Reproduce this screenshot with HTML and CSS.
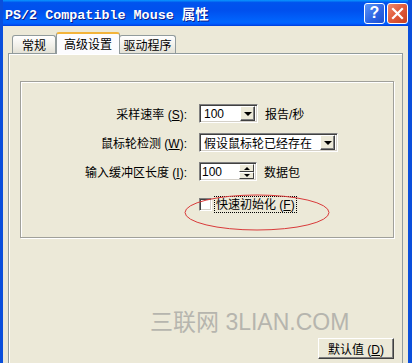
FILE: index.html
```html
<!DOCTYPE html>
<html lang="zh-CN">
<head>
    <meta charset="UTF-8">
    <meta name="viewport" content="width=device-width, initial-scale=1.0">
    <title>PS/2 Compatible Mouse 属性</title>
    <link rel="stylesheet" href="styles.css">
</head>
<body>
    <div class="window">
        <div class="titlebar">
            <span class="title">PS/2 Compatible Mouse 属性</span>
            <span class="tb-btn help">?</span>
            <span class="tb-btn close">
                <svg width="13" height="13" viewBox="0 0 13 13">
                    <path d="M2 2 L11 11 M11 2 L2 11" stroke="#fff" stroke-width="2.2" stroke-linecap="square"/>
                </svg>
            </span>
        </div>

        <div class="body">
            <div class="tabs">
                <div class="tab t1">常规</div>
                <div class="tab t2 active">高级设置</div>
                <div class="tab t3">驱动程序</div>
            </div>

            <div class="panel">
                <div class="group">
                    <div class="label">采样速率 (<u>S</u>):</div>
                    <div class="field">
                        <div class="combo rate"><span class="value">100</span><span class="drop"><i></i></span></div>
                        <span class="unit">报告/秒</span>
                    </div>

                    <div class="label">鼠标轮检测 (<u>W</u>):</div>
                    <div class="field">
                        <div class="combo wheel"><span class="value">假设鼠标轮已经存在</span><span class="drop"><i></i></span></div>
                    </div>

                    <div class="label">输入缓冲区长度 (<u>I</u>):</div>
                    <div class="field">
                        <div class="combo spin"><span class="value">100</span><span class="spinner"><span class="sb up"><i></i></span><span class="sb down"><i></i></span></span></div>
                        <span class="unit">数据包</span>
                    </div>

                    <div class="field check-row">
                        <span class="checkbox"></span>
                        <span class="check-text">快速初始化 (<u>F</u>)</span>
                    </div>

                    <svg class="mark" width="146" height="37" viewBox="0 0 146 37">
                        <ellipse cx="73" cy="18.5" rx="72" ry="17.5" fill="none" stroke="#d93a3a" stroke-width="1"/>
                    </svg>
                </div>

                <div class="watermark">三联网 3LIAN.COM</div>

                <div class="footer">
                    <button class="btn">默认值 (<u>D</u>)</button>
                </div>
            </div>
        </div>
    </div>
</body>
</html>
```

FILE: styles.css
```css
body {
    margin: 0;
    font-family: "Liberation Sans", "Noto Sans CJK SC", sans-serif;
    font-size: 12px;
    background: #ece9d8;
}
.window {
    width: 412px;
    height: 363px;
    box-sizing: border-box;
    overflow: hidden;
    position: relative;
    background: #ece9d8;
    border-left: 3px solid #0a4fdc;
    border-right: 4px solid #0a4fdc;
}
.titlebar {
    height: 26px;
    margin: 0 -4px 0 -3px;
    padding: 0 4px 0 5px;
    display: flex;
    align-items: center;
    background: linear-gradient(to bottom, #0997ff 0%, #0053ee 10%, #0050ee 40%, #0066ff 85%, #005bff 92%, #003dd7 100%);
}
.title {
    flex: 1;
    color: #fff;
    font-family: "Liberation Mono", "Noto Sans CJK SC", monospace;
    font-weight: bold;
    font-size: 13.4px;
    text-shadow: 1px 1px 0 #0a1a8a;
    white-space: nowrap;
}
.tb-btn {
    width: 19px;
    height: 19px;
    border: 1px solid #fff;
    border-radius: 3px;
    margin-left: 2px;
    display: flex;
    align-items: center;
    justify-content: center;
    color: #fff;
}
.help {
    background: linear-gradient(135deg, #5b95f8, #2a62e2 60%, #1d4fd0);
    font-family: "Liberation Sans", sans-serif;
    font-weight: bold;
    font-size: 16px;
}
.close {
    background: linear-gradient(135deg, #f08a6c, #e05a3a 50%, #c8401f);
}

.body {
    padding: 6px 5px 0 5px;
}
.tabs {
    display: flex;
    align-items: flex-end;
    padding-left: 4px;
    height: 21px;
    position: relative;
    z-index: 1;
}
.tab {
    height: 18px;
    box-sizing: border-box;
    border: 1px solid #919b9c;
    border-bottom: none;
    border-radius: 3px 3px 0 0;
    background: linear-gradient(to bottom, #fff, #f0efe8 60%, #e3e1d6);
    display: flex;
    align-items: center;
    justify-content: center;
    color: #000;
}
.t1 { width: 44px; }
.t2 { width: 64px; }
.t3 { width: 57px; margin-left: -1px; }
.tab.active {
    height: 22px;
    margin-bottom: -1px;
    background: #fcfcfe;
    border-top: 2px solid #f3b43a;
    padding-bottom: 2px;
    margin-left: 0;
}
.panel {
    position: relative;
    border: 1px solid #919b9c;
    box-shadow: inset 1px 1px 0 #fff;
    padding: 27px 8px 30px 11px;
    background: #ece9d8;
}
.group {
    position: relative;
    height: 157px;
    box-sizing: border-box;
    border: 1px solid #a0a09a;
    box-shadow: 1px 1px 0 #fff, inset 1px 1px 0 #fff;
    padding-top: 22px;
    display: grid;
    grid-template-columns: 166px 1fr;
    grid-auto-rows: 19px;
    column-gap: 12px;
    row-gap: 10px;
    align-items: center;
}
.label {
    text-align: right;
    white-space: nowrap;
}
.field {
    display: flex;
    align-items: center;
    gap: 7px;
    height: 19px;
}
.combo {
    height: 19px;
    box-sizing: border-box;
    background: #fff;
    border: 1px solid;
    border-color: #808080 #fff #fff #808080;
    box-shadow: inset 1px 1px 0 #404040, inset -1px -1px 0 #d4d0c8;
    display: flex;
    align-items: center;
    padding: 2px 2px 2px 4px;
}
.combo .value {
    flex: 1;
    min-width: 0;
    overflow: hidden;
    white-space: nowrap;
}
.rate { width: 59px; }
.wheel { width: 139px; }
.spin { width: 58px; padding-left: 2px; }
.drop,
.sb {
    flex: none;
    width: 15px;
    height: 15px;
    box-sizing: border-box;
    background: #ece9d8;
    border: 1px solid;
    border-color: #fff #404040 #404040 #fff;
    box-shadow: inset -1px -1px 0 #808080;
    display: flex;
    align-items: center;
    justify-content: center;
}
.drop i {
    width: 0;
    height: 0;
    border-left: 4px solid transparent;
    border-right: 4px solid transparent;
    border-top: 4px solid #000;
}
.spinner {
    flex: none;
    width: 15px;
    height: 15px;
    display: flex;
    flex-direction: column;
}
.sb {
    height: 8px;
    box-shadow: none;
}
.sb.down {
    height: 7px;
}
.sb i {
    width: 0;
    height: 0;
    border-left: 3px solid transparent;
    border-right: 3px solid transparent;
}
.up i { border-bottom: 3px solid #000; }
.down i { border-top: 3px solid #000; }
.check-row {
    grid-column: 2;
    margin-top: 7px;
    gap: 3px;
}
.checkbox {
    width: 13px;
    height: 13px;
    box-sizing: border-box;
    background: #fff;
    border: 1px solid;
    border-color: #808080 #fff #fff #808080;
    box-shadow: inset 1px 1px 0 #404040, inset -1px -1px 0 #d4d0c8;
}
.check-text {
    outline: 1px dotted #000;
    padding: 1px 1px 0 1px;
    line-height: 14px;
}
.mark {
    position: absolute;
    left: 163px;
    top: 112px;
}
.watermark {
    position: absolute;
    left: 141px;
    top: 257px;
    font-family: "Liberation Sans", "Noto Sans CJK SC", sans-serif;
    font-size: 23px;
    line-height: 1;
    color: #b6b5ae;
    white-space: nowrap;
}
.footer {
    display: flex;
    justify-content: flex-end;
    margin-top: 100px;
}
.btn {
    width: 76px;
    height: 21px;
    padding: 0;
    font-family: "Liberation Sans", "Noto Sans CJK SC", sans-serif;
    font-size: 12px;
    color: #000;
    background: #ece9d8;
    border: 1px solid;
    border-color: #fff #404040 #404040 #fff;
    box-shadow: inset -1px -1px 0 #808080;
}
```
